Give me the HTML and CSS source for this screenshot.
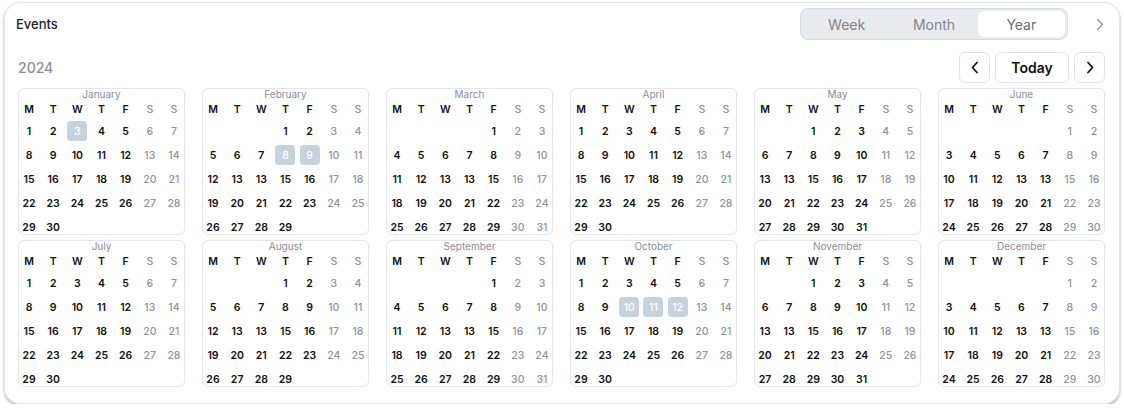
FILE: index.html
```html
<!DOCTYPE html>
<html lang="en">
    <head>
        <meta charset="utf-8" />
        <meta name="viewport" content="width=device-width, initial-scale=1" />
        <title>Events</title>
        <link rel="stylesheet" href="styles.css">
    </head>
    <body>
        <section class="panel">
            <header class="topbar">
                <h1 class="title">Events</h1>
                <div class="views">
                    <button class="view">Week</button>
                    <button class="view">Month</button>
                    <button class="view active">Year</button>
                </div>
                <span class="more">
                    <svg width="8" height="13" viewBox="0 0 8 13"><path d="M1.5 1.5 L6.5 6.5 L1.5 11.5" fill="none" stroke="#8d9098" stroke-width="1.3" stroke-linecap="round" stroke-linejoin="round"/></svg>
                </span>
            </header>
            <div class="toolbar">
                <span class="year">2024</span>
                <div class="nav">
                    <button class="btn arrow">
                        <svg width="8" height="13" viewBox="0 0 8 13"><path d="M6 1.5 L1.5 6.5 L6 11.5" fill="none" stroke="#111" stroke-width="1.8" stroke-linecap="round" stroke-linejoin="round"/></svg>
                    </button>
                    <button class="btn today">Today</button>
                    <button class="btn arrow">
                        <svg width="8" height="13" viewBox="0 0 8 13"><path d="M2 1.5 L6.5 6.5 L2 11.5" fill="none" stroke="#111" stroke-width="1.8" stroke-linecap="round" stroke-linejoin="round"/></svg>
                    </button>
                </div>
            </div>
            <div class="months" id="months"><!-- los meses se generan en script.js --></div>
        </section>
        <script src="script.js"></script>
    </body>
</html>
```

FILE: styles.css
```css
*{ margin:0; padding:0; box-sizing:border-box; }
body{ background:#fff; 
    font-family: Inter, "Noto Sans", sans-serif; 
    color:#111; }
button{ font-family:inherit; background:none; border:none; cursor:pointer; }

.panel{ margin:2px 0 0 4px; 
    width:1116px; height:402px; 
    border:1px solid #e3e4e9; 
    border-radius:16px; 
    box-shadow:0 2px 3px rgba(0,0,0,.3); 
    padding:5px 14px 0 13px; }

.topbar{ display:flex; align-items:center; height:32px; }
.title{ font-size:13px; font-weight:500; color:#222; margin-left:-2px; flex:1; }
.views{ display:flex; padding:2px; 
    background:#eaebef; 
    border:1px solid #dadbe0; 
    border-radius:8px; 
    width:268px; height:32px; }
.view{ flex:1; font-size:14px; color:#81858d; border-radius:6px; }
.view.active{ background:#fff; color:#6b6f77; }
.more{ display:flex; margin-left:28px; margin-right:1px; }

.toolbar{ display:flex; align-items:center; justify-content:space-between; height:31px; margin-top:12px; }
.year{ font-size:14px; font-weight:500; color:#8a8e97; }
.nav{ display:flex; gap:5px; }
.btn{ height:31px; border:1px solid #e2e3e8; border-radius:6px; background:#fff; display:flex; align-items:center; justify-content:center; }
.arrow{ width:31px; }
.today{ width:74px; font-size:14px; font-weight:600; color:#111; }

.months{ display:grid; grid-template-columns:repeat(6, 167px); column-gap:17px; row-gap:5px; margin-top:5px; }
.month{ height:147px; border:1px solid #e3e5ea; border-radius:6px; }
.month-name{ text-align:center; font-size:10px; line-height:11px; color:#8a8e97; }
.weekdays, .dates{ display:grid; grid-template-columns:repeat(7, 20px); justify-content:space-between; }
.weekdays{ height:14px; margin:2px 0 5px; }
.dates{ grid-auto-rows:20px; row-gap:4px; }
.cell{ display:flex; align-items:center; justify-content:center; font-size:10.5px; font-weight:600; color:#111; }
.cell.wk{ color:#8f939b; font-weight:500; }
.cell.sel{ background:#c6d3dd; color:#fff; border-radius:4px; font-weight:500; }
```

FILE: script.js
```js
// nombre, día en que empieza (0 = lunes), días, días marcados
const meses = [
    {nombre:"January", inicio:0, dias:30, marcados:[3]},
    {nombre:"February", inicio:3, dias:29, marcados:[8, 9]},
    {nombre:"March", inicio:4, dias:31, marcados:[]},
    {nombre:"April", inicio:0, dias:30, marcados:[]},
    {nombre:"May", inicio:2, dias:31, marcados:[]},
    {nombre:"June", inicio:5, dias:30, marcados:[]},
    {nombre:"July", inicio:0, dias:30, marcados:[]},
    {nombre:"August", inicio:3, dias:29, marcados:[]},
    {nombre:"September", inicio:4, dias:31, marcados:[]},
    {nombre:"October", inicio:0, dias:30, marcados:[10, 11, 12]},
    {nombre:"November", inicio:2, dias:31, marcados:[]},
    {nombre:"December", inicio:5, dias:30, marcados:[]}
];

const letras = ["M", "T", "W", "T", "F", "S", "S"];
const contenedor = document.querySelector("#months");

meses.forEach((m) => {
    let cabecera = "";
    letras.forEach((l, i) => {
        cabecera += `<span class="cell${i > 4 ? " wk" : ""}">${l}</span>`;
    });

    let celdas = "";
    for (let i = 0; i < m.inicio; i++) celdas += `<span></span>`;
    for (let d = 1; d <= m.dias; d++) {
        const col = (m.inicio + d - 1) % 7;
        // el 14 entre semana sale como 13 en la captura
        const texto = (d === 14 && col < 5) ? 13 : d;
        let clase = "cell";
        if (col > 4) clase += " wk";
        if (m.marcados.includes(d)) clase += " sel";
        celdas += `<span class="${clase}">${texto}</span>`;
    }

    contenedor.innerHTML += `<div class="month">
        <div class="month-name">${m.nombre}</div>
        <div class="weekdays">${cabecera}</div>
        <div class="dates">${celdas}</div>
    </div>`;
});
```
